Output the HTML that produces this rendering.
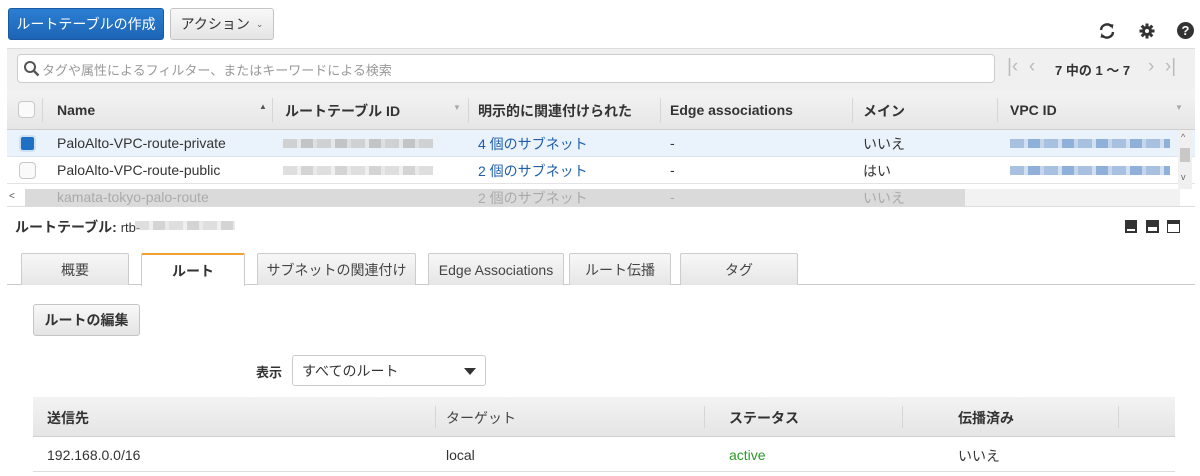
<!DOCTYPE html>
<html><head><meta charset="utf-8"><style>
*{box-sizing:border-box;margin:0;padding:0}
body{width:1200px;height:476px;background:#fff;font-family:"Liberation Sans","Noto Sans CJK JP",sans-serif;font-size:14px;color:#333;position:relative;overflow:hidden}
.a{position:absolute}
.btn{position:absolute;border:1px solid #c4c4c4;border-radius:3px;background:linear-gradient(#f8f8f8,#e4e4e4);color:#333;font-size:14px;display:flex;align-items:center;justify-content:center}
.blur{position:absolute;height:9px;background:repeating-linear-gradient(90deg,#c9c9c9 0 14px,#e4e4e4 14px 18px,#b8b8b8 18px 30px,#dadada 30px 34px);opacity:.8}
.bblur{position:absolute;height:9px;background:repeating-linear-gradient(90deg,#a9c1e0 0 14px,#d2dff0 14px 18px,#8fb0d8 18px 30px,#c5d6ec 30px 34px)}
.sep{position:absolute;width:1px;background:#d6d6d6}
.cb{position:absolute;width:17px;height:17px;border:1px solid #c8c8c8;border-radius:4px;background:#fafafa}
.th{position:absolute;font-weight:bold;font-size:14px;color:#333}
.tab{position:absolute;top:253px;height:32px;border:1px solid #ccc;border-bottom:none;border-radius:2px 2px 0 0;background:linear-gradient(#f7f7f7,#e6e6e6);font-size:14px;display:flex;align-items:center;justify-content:center;color:#444}
</style></head><body>

<div class="a" style="left:8px;top:8px;width:156px;height:32px;background:linear-gradient(#2b7fd3,#1c64b5);border:1px solid #1a5aa3;border-radius:3px;color:#fff;font-size:14px;display:flex;align-items:center;justify-content:center">ルートテーブルの作成</div>
<div class="btn" style="left:170px;top:8px;width:104px;height:32px">アクション <span style="font-size:9px;margin-left:6px;color:#666">&#8964;</span></div>

<svg class="a" style="left:1097px;top:21px" width="20" height="20" viewBox="0 0 20 20"><path d="M4 9a6 6 0 0 1 10.5-3.5" fill="none" stroke="#333" stroke-width="2.4"/><path d="M12 3l4.5 0.5-1 4.5z" fill="#333"/><path d="M16 11a6 6 0 0 1-10.5 3.5" fill="none" stroke="#333" stroke-width="2.4"/><path d="M8 17l-4.5-0.5 1-4.5z" fill="#333"/></svg>
<svg class="a" style="left:1139px;top:23px" width="16" height="16" viewBox="0 0 16 16"><g fill="#333"><circle cx="8" cy="8" r="5"/><rect x="6.5" y="0.5" width="3" height="15"/><rect x="0.5" y="6.5" width="15" height="3"/><rect x="6.5" y="0.5" width="3" height="15" transform="rotate(45 8 8)"/><rect x="6.5" y="0.5" width="3" height="15" transform="rotate(-45 8 8)"/></g><circle cx="8" cy="8" r="2" fill="#fff"/></svg>
<div class="a" style="left:1177px;top:22px;width:17px;height:17px;border-radius:50%;background:#333;color:#fff;font-weight:bold;font-size:13px;text-align:center;line-height:17px">?</div>

<div class="a" style="left:7px;top:48px;width:1188px;height:42px;background:#f0f0f0;border-top:1px solid #ddd"></div>
<div class="a" style="left:17px;top:54px;width:978px;height:29px;background:#fff;border:1px solid #ccc;border-radius:4px"></div>
<svg class="a" style="left:23px;top:60px" width="17" height="17" viewBox="0 0 17 17"><circle cx="7" cy="7" r="5" fill="none" stroke="#555" stroke-width="2"/><path d="M10.5 10.5l5 5" stroke="#555" stroke-width="2.4"/></svg>
<div class="a" style="left:42px;top:60px;font-size:13px;color:#999">タグや属性によるフィルター、またはキーワードによる検索</div>
<div class="a" style="left:1007px;top:56px;font-size:19px;color:#bbb">|&lsaquo;&nbsp;&nbsp;&lsaquo;</div>
<div class="a" style="left:1055px;top:60px;font-size:13px;font-weight:bold;color:#333">7 中の 1 ～ 7</div>
<div class="a" style="left:1148px;top:56px;font-size:19px;color:#bbb">&rsaquo;&nbsp;&nbsp;&rsaquo;|</div>

<div class="a" style="left:7px;top:90px;width:1188px;height:40px;background:linear-gradient(#f3f3f3,#e6e6e6);border-bottom:1px solid #cfcfcf"></div>
<div class="cb" style="left:18px;top:101px"></div>
<div class="sep" style="left:42px;top:98px;height:24px"></div>
<div class="th" style="left:57px;top:102px">Name</div>
<div class="a" style="left:259px;top:102px;font-size:8px;color:#555">▲</div>
<div class="sep" style="left:272px;top:98px;height:24px"></div>
<div class="th" style="left:285px;top:101px">ルートテーブル ID</div>
<div class="a" style="left:453px;top:103px;font-size:8px;color:#aaa">▼</div>
<div class="sep" style="left:468px;top:98px;height:24px"></div>
<div class="th" style="left:478px;top:101px">明示的に関連付けられた</div>
<div class="sep" style="left:660px;top:98px;height:24px"></div>
<div class="th" style="left:670px;top:102px">Edge associations</div>
<div class="sep" style="left:852px;top:98px;height:24px"></div>
<div class="th" style="left:863px;top:101px">メイン</div>
<div class="sep" style="left:997px;top:98px;height:24px"></div>
<div class="th" style="left:1010px;top:102px">VPC ID</div>
<div class="a" style="left:1175px;top:103px;font-size:8px;color:#aaa">▼</div>

<div class="a" style="left:7px;top:130px;width:1188px;height:27px;background:#eaf2fb;border-bottom:1px solid #dde6f0"></div>
<div class="a" style="left:19px;top:135px;width:17px;height:17px;border-radius:4px;background:#1f6fc5;border:2px solid #cfe0f2"></div>
<div class="a" style="left:57px;top:135px">PaloAlto-VPC-route-private</div>
<div class="blur" style="left:283px;top:139px;width:150px"></div>
<div class="a" style="left:478px;top:134px;color:#1f5fa8">4 個のサブネット</div>
<div class="a" style="left:670px;top:135px">-</div>
<div class="a" style="left:863px;top:134px">いいえ</div>
<div class="bblur" style="left:1010px;top:139px;width:160px"></div>

<div class="a" style="left:7px;top:157px;width:1188px;height:27px;background:#fff;border-bottom:1px solid #e3e3e3"></div>
<div class="cb" style="left:19px;top:162px"></div>
<div class="a" style="left:57px;top:162px">PaloAlto-VPC-route-public</div>
<div class="blur" style="left:283px;top:166px;width:150px;opacity:.6"></div>
<div class="a" style="left:478px;top:161px;color:#1f5fa8">2 個のサブネット</div>
<div class="a" style="left:670px;top:162px">-</div>
<div class="a" style="left:863px;top:161px">はい</div>
<div class="bblur" style="left:1010px;top:166px;width:160px"></div>

<div class="a" style="left:1178px;top:130px;width:14px;height:76px;background:#f0f0f0"></div>
<div class="a" style="left:1180px;top:148px;width:10px;height:14px;background:#c8c8c8"></div>
<div class="a" style="left:1181px;top:132px;font-size:9px;color:#666">^</div>
<div class="a" style="left:1181px;top:172px;font-size:9px;color:#666">v</div>

<div class="a" style="left:7px;top:189px;width:1188px;height:17px;background:#fff;overflow:hidden;color:#aaa">
 <div class="a" style="left:18px;top:0;width:940px;height:17px;background:#dadada"></div>
 <div class="a" style="left:958px;top:0;width:215px;height:17px;background:#f2f2f2"></div>
 <div class="a" style="left:50px;top:0px">kamata-tokyo-palo-route</div>
 <div class="a" style="left:471px;top:-1px">2 個のサブネット</div>
 <div class="a" style="left:663px;top:0px">-</div>
 <div class="a" style="left:856px;top:-1px">いいえ</div>
</div>
<div class="a" style="left:9px;top:191px;font-size:10px;color:#555">&lt;</div>
<div class="a" style="left:7px;top:206px;width:1188px;height:1px;background:#ddd"></div>

<div class="a" style="left:15px;top:217px;font-weight:bold;font-size:14px">ルートテーブル: <span style="font-weight:normal;font-size:13px">rtb-</span></div>
<div class="blur" style="left:135px;top:221px;width:100px;opacity:.6"></div>
<div class="a" style="left:1125px;top:220px;width:12px;height:13px;border:1.5px solid #333;background:#333"><div style="position:absolute;left:1px;right:1px;bottom:1px;height:2px;background:#fff"></div></div>
<div class="a" style="left:1146px;top:220px;width:13px;height:13px;border:1.5px solid #333;background:#333"><div style="position:absolute;left:1px;right:1px;bottom:1px;height:4px;background:#fff"></div></div>
<div class="a" style="left:1167px;top:220px;width:13px;height:13px;border:1.5px solid #333;border-top-width:4px;background:#fff"></div>

<div class="a" style="left:7px;top:284px;width:1188px;height:1px;background:#ccc"></div>
<div class="tab" style="left:21px;width:108px">概要</div>
<div class="tab" style="left:141px;width:104px;height:33px;background:#fff;border-top:2px solid #f0a030;font-weight:bold;color:#333">ルート</div>
<div class="tab" style="left:257px;width:159px">サブネットの関連付け</div>
<div class="tab" style="left:428px;width:136px">Edge Associations</div>
<div class="tab" style="left:569px;width:102px">ルート伝播</div>
<div class="tab" style="left:680px;width:118px">タグ</div>

<div class="btn" style="left:33px;top:304px;width:107px;height:32px;font-weight:bold">ルートの編集</div>

<div class="a" style="left:256px;top:362px;font-weight:bold;font-size:13px">表示</div>
<div class="a" style="left:292px;top:355px;width:194px;height:31px;border:1px solid #ccc;border-radius:3px;background:#fff"></div>
<div class="a" style="left:302px;top:361px">すべてのルート</div>
<div class="a" style="left:464px;top:368px;width:0;height:0;border-left:6px solid transparent;border-right:6px solid transparent;border-top:7px solid #333"></div>

<div class="a" style="left:33px;top:397px;width:1142px;height:40px;background:linear-gradient(#f3f3f3,#e5e5e5);border-bottom:1px solid #cfcfcf"></div>
<div class="th" style="left:47px;top:408px">送信先</div>
<div class="sep" style="left:435px;top:406px;height:22px"></div>
<div class="a" style="left:446px;top:408px;color:#444">ターゲット</div>
<div class="sep" style="left:704px;top:406px;height:22px"></div>
<div class="th" style="left:729px;top:408px">ステータス</div>
<div class="sep" style="left:902px;top:406px;height:22px"></div>
<div class="th" style="left:958px;top:408px">伝播済み</div>
<div class="sep" style="left:1118px;top:406px;height:22px"></div>
<div class="a" style="left:33px;top:471px;width:1142px;height:1px;background:#ddd"></div>
<div class="a" style="left:47px;top:447px">192.168.0.0/16</div>
<div class="a" style="left:446px;top:447px">local</div>
<div class="a" style="left:729px;top:447px;color:#2a9a2a">active</div>
<div class="a" style="left:958px;top:446px">いいえ</div>
</body></html>
